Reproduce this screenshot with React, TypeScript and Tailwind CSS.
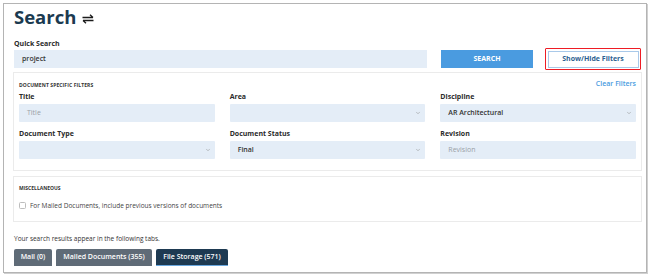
import { ChevronDown } from 'lucide-react'

const font = { fontFamily: '"Open Sans", "Liberation Sans", sans-serif' }

function Label({ children }: { children: React.ReactNode }) {
  return <div className="h-[11px] text-[7px] font-bold leading-[11px] text-[#2b2b2b]">{children}</div>
}

function TextBox({ placeholder }: { placeholder: string }) {
  return (
    <div className="flex h-[18px] items-center rounded-[1px] bg-[#e4edf7] pl-[8px] text-[7px] text-[#9aa0a6]">
      {placeholder}
    </div>
  )
}

function SelectBox({ value }: { value?: string }) {
  return (
    <div className="flex h-[18px] items-center justify-between rounded-[1px] bg-[#e4edf7] pl-[8px] pr-[4px] text-[7px] font-semibold text-[#333]">
      <span>{value}</span>
      <ChevronDown className="h-[6px] w-[6px] text-[#888]" strokeWidth={2} />
    </div>
  )
}

export default function App() {
  return (
    <div className="h-[277px] w-[650px] bg-white p-[3px]" style={font}>
      <div className="flex h-[270px] flex-col border border-[#b4b4b4] pl-[9px] pr-[4px] shadow-[1px_1px_0_#d0d0d0]">
        {/* header */}
        <div className="flex h-[26px] items-center gap-[6px] pl-[1px]">
          <h1 className="text-[18.5px] font-bold leading-none text-[#1b3a50]">Search</h1>
          <svg width="12" height="10" viewBox="0 0 12 10" className="mt-[3px]">
            <path d="M0.5 3.5 H11 M8 0.8 L11 3.5" stroke="#1b1b1b" strokeWidth="1.3" fill="none" />
            <path d="M11.5 6.5 H1 M4 9.2 L1 6.5" stroke="#1b1b1b" strokeWidth="1.3" fill="none" />
          </svg>
        </div>

        {/* quick search */}
        <div className="mt-[9px] pl-[1px] text-[7px] font-bold leading-[9px] text-[#2b2b2b]">Quick Search</div>
        <div className="mt-[2px] flex h-[18px] items-center pl-[1px]">
          <div className="flex h-[18px] w-[413px] items-center bg-[#e4edf7] pl-[8px] text-[7px] font-semibold text-[#333]">project</div>
          <button className="ml-[14px] h-[18px] w-[92px] bg-[#4a9be0] text-[7px] font-bold text-white">SEARCH</button>
          <div className="ml-[12px] rounded-[1px] border-[1.5px] border-[#ee1c24] p-[1.5px]">
            <button className="flex h-[17px] w-[91px] items-center justify-center border border-[#a9c9e9] bg-white text-[7px] font-bold text-[#2d5f91]">
              Show/Hide Filters
            </button>
          </div>
        </div>

        {/* document specific filters */}
        <div className="mt-[4px] h-[99px] border border-[#ebebeb] px-[5px] pr-[5px]">
          <div className="flex h-[16px] items-end justify-between">
            <span className="text-[5px] font-bold tracking-[0.1px] text-[#333]">DOCUMENT SPECIFIC FILTERS</span>
            <span className="text-[7px] font-semibold text-[#4a9be0]">Clear Filters</span>
          </div>
          <div className="mt-[2px] grid grid-cols-3 gap-x-[15px] gap-y-[6px]">
            <div className="flex flex-col gap-[2px]">
              <Label>Title</Label>
              <TextBox placeholder="Title" />
            </div>
            <div className="flex flex-col gap-[2px]">
              <Label>Area</Label>
              <SelectBox />
            </div>
            <div className="flex flex-col gap-[2px]">
              <Label>Discipline</Label>
              <SelectBox value="AR Architectural" />
            </div>
            <div className="flex flex-col gap-[2px]">
              <Label>Document Type</Label>
              <SelectBox />
            </div>
            <div className="flex flex-col gap-[2px]">
              <Label>Document Status</Label>
              <SelectBox value="Final" />
            </div>
            <div className="flex flex-col gap-[2px]">
              <Label>Revision</Label>
              <TextBox placeholder="Revision" />
            </div>
          </div>
        </div>

        {/* miscellaneous */}
        <div className="mt-[5px] h-[46px] border border-[#ebebeb] px-[5px]">
          <div className="mt-[7px] text-[5px] font-bold leading-[8px] text-[#333]">MISCELLANEOUS</div>
          <label className="mt-[9px] flex items-center gap-[4px] text-[6.5px] text-[#444]">
            <span className="h-[7px] w-[7px] rounded-[1.5px] border border-[#bdbdbd] bg-white" />
            For Mailed Documents, include previous versions of documents
          </label>
        </div>

        <div className="mt-[12px] pl-[1px] text-[6.5px] leading-[9px] text-[#333]">Your search results appear in the following tabs.</div>

        <div className="mt-[6px] flex gap-[4px] pl-[1px]">
          <div className="flex h-[17px] w-[38px] items-center justify-center rounded-t-[2px] bg-[#5f6b77] text-[7px] font-semibold text-white">Mail (0)</div>
          <div className="flex h-[17px] w-[96px] items-center justify-center rounded-t-[2px] bg-[#5f6b77] text-[7px] font-semibold text-white">Mailed Documents (355)</div>
          <div className="flex h-[17px] w-[72px] items-center justify-center rounded-t-[2px] border-b-[1.5px] border-[#6aa8df] bg-[#1e3a52] text-[7px] font-semibold text-white">File Storage (571)</div>
        </div>
      </div>
    </div>
  )
}
